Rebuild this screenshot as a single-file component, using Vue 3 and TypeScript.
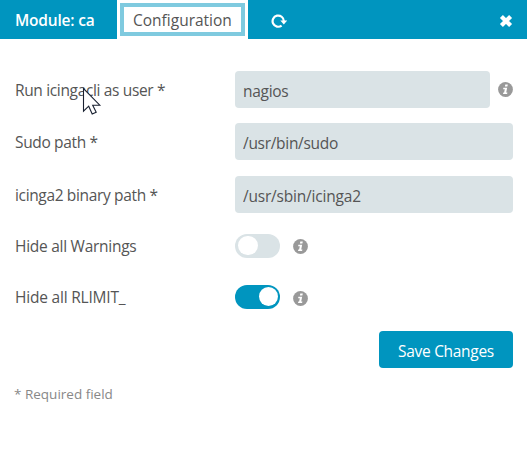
<script setup lang="ts">
import { ref } from 'vue'

interface TextField {
  id: string
  label: string
  value: string
  hint: boolean
}

interface ToggleField {
  id: string
  label: string
  on: boolean
}

const textFields = ref<TextField[]>([
  { id: 'user', label: 'Run icingacli as user *', value: 'nagios', hint: true },
  { id: 'sudo', label: 'Sudo path *', value: '/usr/bin/sudo', hint: false },
  { id: 'binary', label: 'icinga2 binary path *', value: '/usr/sbin/icinga2', hint: false },
])

const toggles = ref<ToggleField[]>([
  { id: 'warnings', label: 'Hide all Warnings', on: false },
  { id: 'rlimit', label: 'Hide all RLIMIT_', on: true },
])
</script>

<template>
  <div class="page">
    <nav class="tabs">
      <a class="tab module">Module: ca</a>
      <a class="tab active"><span>Configuration</span></a>
      <a class="refresh">
        <svg width="16" height="14" viewBox="0 0 16 14">
          <path d="M10.6 11.6A5.6 5.6 0 1 1 12.8 7.1" fill="none" stroke="#fff" stroke-width="2.2" />
          <path d="M9.3 6.6H16.2L12.8 10.4Z" fill="#fff" />
        </svg>
      </a>
      <a class="close">
        <svg width="14" height="14" viewBox="0 0 14 14">
          <path d="M2.4 2.4L11.6 11.6M11.6 2.4L2.4 11.6" stroke="#fff" stroke-width="4.2" />
        </svg>
      </a>
    </nav>

    <form class="form" @submit.prevent>
      <div v-for="f in textFields" :key="f.id" class="row" :class="f.id">
        <label :for="f.id"><span>{{ f.label }}</span></label>
        <input :id="f.id" v-model="f.value" type="text" spellcheck="false" />
        <svg v-if="f.hint" class="info" viewBox="0 0 15 15">
          <circle cx="7.5" cy="7.5" r="7.4" fill="#999" />
          <path d="M7.3 2.5H9.8L9.4 4.6H6.9ZM5.4 5.7H9.2L8.2 10.5H9.4L9.1 12H5L5.3 10.5H6.1L6.8 7.2H5.1Z" fill="#fff" />
        </svg>
      </div>
      <div v-for="t in toggles" :key="t.id" class="row switch-row" :class="t.id">
        <label><span>{{ t.label }}</span></label>
        <button type="button" class="switch" :class="{ on: t.on }" @click="t.on = !t.on"><i></i></button>
        <svg class="info" viewBox="0 0 15 15">
          <circle cx="7.5" cy="7.5" r="7.4" fill="#999" />
          <path d="M7.3 2.5H9.8L9.4 4.6H6.9ZM5.4 5.7H9.2L8.2 10.5H9.4L9.1 12H5L5.3 10.5H6.1L6.8 7.2H5.1Z" fill="#fff" />
        </svg>
      </div>
      <div class="actions"><button type="submit" class="save">Save Changes</button></div>
      <p class="note">* Required field</p>
    </form>

    <svg class="pointer" width="20" height="29" viewBox="0 0 20 29">
      <path d="M1.5 1.5V24.2L6.7 19.2L10.2 27L14.2 25.2L10.7 18.2H17.8Z" fill="#fff" stroke="#182030" stroke-width="1.1" />
    </svg>
  </div>
</template>

<style>
body {
  margin: 0;
  background: #fff;
}
</style>

<style scoped>
.page {
  position: relative;
  width: 527px;
  height: 460px;
  overflow: hidden;
  color: #555;
  font-family: "Open Sans", "Noto Sans", sans-serif;
  font-size: 15.5px;
  line-height: 20px;
}
.tabs {
  display: flex;
  align-items: center;
  box-sizing: border-box;
  height: 39px;
  padding-right: 14px;
  background: #0095bf;
}
.tab {
  box-sizing: border-box;
  white-space: nowrap;
}
.module {
  width: 117px;
  padding-left: 15px;
  color: #fff;
  font-weight: 600;
  letter-spacing: -0.2px;
}
.active {
  width: 131px;
  height: 39px;
  padding: 3px;
  background: #fff;
}
.active span {
  display: block;
  box-sizing: border-box;
  height: 33px;
  border: 4px solid #7fcadf;
  padding: 3px 0 0 9px;
}
.refresh,
.close {
  display: flex;
}
.refresh {
  margin-left: 23px;
  margin-top: 2px;
}
.close {
  margin-left: auto;
  margin-top: 2px;
}
.form {
  padding: 32px 14px 0 15px;
}
.row {
  display: flex;
  align-items: center;
  height: 37px;
  margin-bottom: 15px;
}
.row.sudo {
  margin-bottom: 16px;
}
.row.binary {
  margin-bottom: 21px;
}
.row label {
  width: 220px;
  flex: none;
  letter-spacing: -0.35px;
  white-space: nowrap;
}
.row.warnings label {
  letter-spacing: -0.27px;
}
.row.rlimit label {
  letter-spacing: -0.2px;
}
.row input {
  box-sizing: border-box;
  flex: 1;
  min-width: 0;
  height: 37px;
  padding: 2px 8px 0;
  border: 0;
  border-radius: 4px;
  outline: 0;
  background: #dae3e6;
  color: #555;
  font: inherit;
  letter-spacing: -0.3px;
}
.row.binary input {
  letter-spacing: -0.2px;
}
.info {
  width: 15px;
  height: 15px;
  margin-left: 8px;
  flex: none;
}
.switch-row {
  height: 24px;
  margin-bottom: 27px;
}
.switch-row.rlimit {
  margin-bottom: 22px;
}
.switch-row .info {
  margin-left: 12.5px;
  margin-top: 1px;
}
.rlimit .info {
  margin-top: 3px;
}
.switch {
  display: flex;
  align-items: center;
  box-sizing: border-box;
  width: 45px;
  height: 24px;
  padding: 0 3px 1px;
  border: 0;
  border-radius: 12px;
  background: #dae3e6;
}
.switch i {
  width: 19.5px;
  height: 19.5px;
  border-radius: 50%;
  background: #fff;
}
.switch.on {
  justify-content: flex-end;
  padding-right: 2px;
  background: #0095bf;
}
.actions {
  display: flex;
  justify-content: flex-end;
}
.save {
  box-sizing: border-box;
  width: 134px;
  height: 37px;
  padding: 2px 0 0;
  border: 0;
  border-radius: 4px;
  background: #0095bf;
  color: #fff;
  font: inherit;
  letter-spacing: -0.3px;
  white-space: nowrap;
}
.note {
  margin: 17px 0 0 -1px;
  color: #888;
  font-size: 13.5px;
  line-height: 18px;
}
.pointer {
  position: absolute;
  left: 82px;
  top: 87px;
}
</style>
